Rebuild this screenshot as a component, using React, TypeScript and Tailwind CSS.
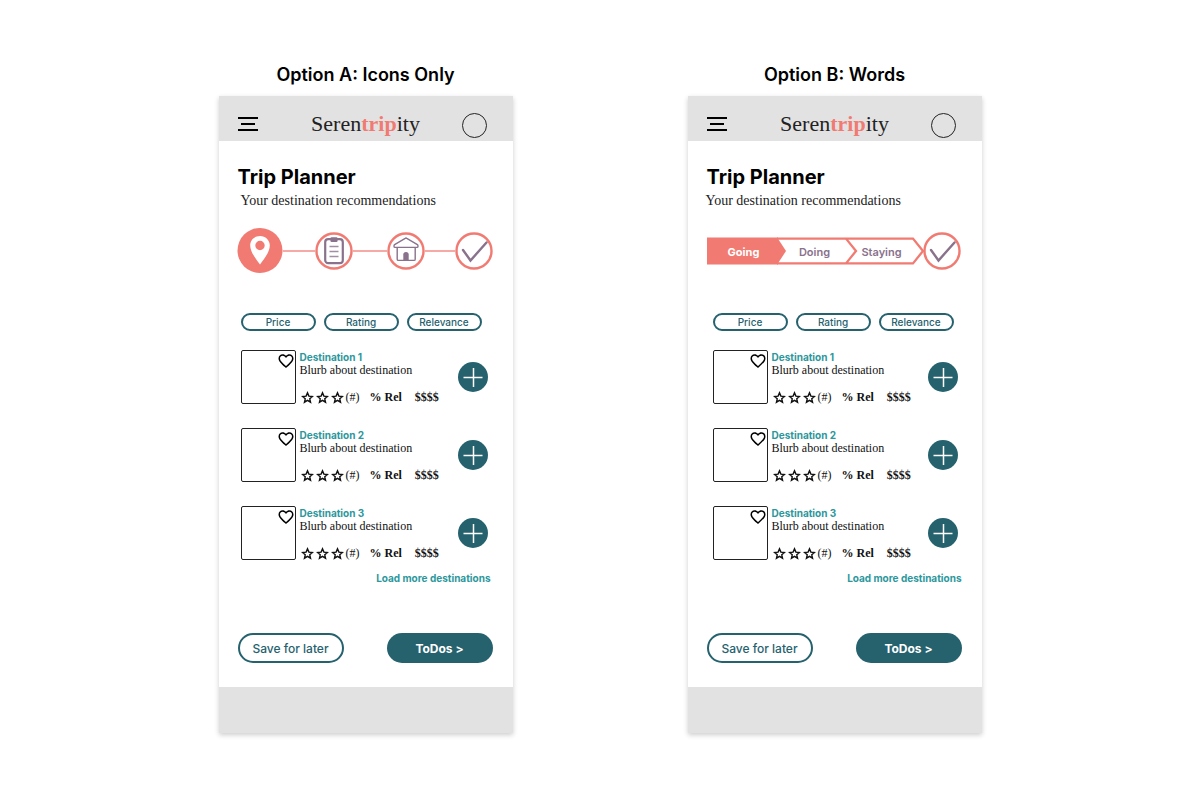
import type { ReactNode } from "react";

const sans = "font-['Inter',sans-serif]";
const serif = "font-['Liberation_Serif',serif]";

function Check() {
  return (
    <svg viewBox="0 0 38 38" className="size-[38px]" fill="none" aria-hidden="true">
      <circle cx="19" cy="19" r="17.5" fill="#fff" stroke="#f17b72" strokeWidth="2.4" />
      <path d="M8 18L15.5 28.5L31.5 10.5" stroke="#8a728c" strokeWidth="2.4" strokeLinecap="round" />
    </svg>
  );
}

function Pin() {
  return (
    <svg viewBox="0 0 46 46" className="size-[46px]" aria-hidden="true">
      <circle cx="23" cy="22.5" r="22.5" fill="#f17b72" />
      <path
        fill="#fff"
        fillRule="evenodd"
        d="M23 8C17.5 8 13.2 12.2 13.2 17.5C13.2 24 19 31 23 36.5C27 31 32.8 24 32.8 17.5C32.8 12.2 28.5 8 23 8ZM23 12.8A4.7 4.7 0 1 1 23 22.2A4.7 4.7 0 1 1 23 12.8Z"
      />
    </svg>
  );
}

function Clipboard() {
  return (
    <svg viewBox="0 0 38 38" className="size-[38px]" fill="none" aria-hidden="true">
      <circle cx="19" cy="19" r="17.5" stroke="#f17b72" strokeWidth="2.4" />
      <rect x="10.2" y="7.2" width="17.6" height="24" rx="3" stroke="#8a728c" strokeWidth="2.2" />
      <rect x="15.4" y="5.2" width="7.2" height="4.8" rx="1.2" fill="#8a728c" />
      <path d="M14.5 14.5H23.5M14.5 19.5H23.5M14.5 24.5H23.5" stroke="#a18ea3" strokeWidth="1.4" />
    </svg>
  );
}

function House() {
  return (
    <svg viewBox="0 0 38 38" className="size-[38px]" fill="none" aria-hidden="true">
      <circle cx="19" cy="19" r="17.5" stroke="#f17b72" strokeWidth="2.4" />
      <path
        d="M18.2 6.4Q19 5.7 19.8 6.4L30.4 12.6Q31 13 31 14.2Q31 15.4 30 15.4H8Q7 15.4 7 14.2Q7 13 7.6 12.6ZM10.2 15.4V27.2Q10.2 28.4 11.4 28.4H27Q28.2 28.4 28.2 27.2V15.4"
        stroke="#8a728c"
        strokeWidth="1.4"
        strokeLinejoin="round"
      />
      <path d="M16.3 28.5V22.5Q16.3 20 19 20Q21.7 20 21.7 22.5V28.5Z" fill="#8a728c" />
    </svg>
  );
}

function IconSteps() {
  return (
    <nav aria-label="Trip steps" className="flex h-[46px] items-center px-[18px] pr-5">
      <button aria-label="Going" className="shrink-0"><Pin /></button>
      <span className="h-0.5 flex-[33] bg-[#f6aaa6]" />
      <button aria-label="Doing" className="shrink-0"><Clipboard /></button>
      <span className="h-0.5 flex-[34] bg-[#f6aaa6]" />
      <button aria-label="Staying" className="shrink-0"><House /></button>
      <span className="h-0.5 flex-[30] bg-[#f6aaa6]" />
      <button aria-label="Done" className="shrink-0"><Check /></button>
    </nav>
  );
}

function WordSteps() {
  return (
    <nav aria-label="Trip steps" className="flex h-[46px] items-center pl-[19px]">
      <div className={`relative flex h-7 w-[216px] pt-0.5 text-[11px] font-semibold text-[#8a728c] ${sans}`}>
        <svg viewBox="0 0 218 28" className="absolute top-0 left-0 h-7 w-[218px]" fill="none" aria-hidden="true">
          <path d="M0 0.5H71V27.5H0Z" fill="#f17b72" />
          <path d="M70 1.6H206L216 14L206 26.4H70M139 1.6L149 14L139 26.4" stroke="#f17b72" strokeWidth="2.3" />
          <path d="M69 1H70.5L79 14L70.5 27H69Z" fill="#f17b72" />
        </svg>
        <button className="relative w-[74px] font-bold text-white">Going</button>
        <button className="relative w-[68px]">Doing</button>
        <button className="relative w-[66px]">Staying</button>
      </div>
      <button aria-label="Done" className="relative"><Check /></button>
    </nav>
  );
}

function Star() {
  return (
    <svg viewBox="0 0 24 24" className="h-[15px] w-[13px]" fill="none" stroke="#111" strokeWidth="2.6" aria-hidden="true">
      <path d="M12 3.5L14.6 9.5L21 10.1L16.2 14.4L17.6 20.7L12 17.3L6.4 20.7L7.8 14.4L3 10.1L9.4 9.5Z" />
    </svg>
  );
}

function Destination({ name }: { name: string }) {
  return (
    <li className="flex h-[54px] items-center">
      <div className="flex h-[54px] w-[55px] shrink-0 justify-end rounded-[2px] border border-[#222]">
        <button aria-label={`Save ${name}`} className="mt-px h-[18px]">
          <svg viewBox="0 0 24 24" className="size-[18px]" fill="#000" aria-hidden="true">
            <path d="M16.5 3c-1.74 0-3.41.81-4.5 2.09C10.91 3.81 9.24 3 7.5 3 4.42 3 2 5.42 2 8.5c0 3.78 3.4 6.86 8.55 11.54L12 21.35l1.45-1.32C18.6 15.36 22 12.28 22 8.5 22 5.42 19.58 3 16.5 3zm-4.4 15.55l-.1.1-.1-.1C7.14 14.24 4 11.39 4 8.5 4 6.5 5.5 5 7.5 5c1.54 0 3.04.99 3.57 2.36h1.87C13.46 5.99 14.96 5 16.5 5c2 0 3.5 1.5 3.5 3.5 0 2.89-3.14 5.74-7.9 10.05z" />
          </svg>
        </button>
      </div>
      <div className={`ml-1 flex h-[54px] flex-1 flex-col text-[12px] leading-[14px] whitespace-nowrap text-[#111] ${serif}`}>
        <h3 className={`text-[10px] leading-[14px] font-bold text-[#2c979c] ${sans}`}>{name}</h3>
        <p className="leading-[13px]">Blurb about destination</p>
        <div className="mt-auto flex h-[14px] items-center gap-0.5 pl-px">
          <Star />
          <Star />
          <Star />
          <span>(#)</span>
          <span className="ml-2 font-bold">% Rel</span>
          <span className="ml-[11px] font-bold">$$$$</span>
        </div>
      </div>
      <button aria-label={`Add ${name}`} className="shrink-0">
        <svg viewBox="0 0 30 30" className="size-[30px]" fill="none" aria-hidden="true">
          <circle cx="15" cy="15" r="15" fill="#25626e" />
          <path d="M5.5 15.5H24.5M15.5 6V25" stroke="#fff" strokeWidth="1.5" />
        </svg>
      </button>
    </li>
  );
}

type PhoneProps = { title: string; steps: ReactNode; subtitlePad: string; listPad: string; morePad: string };

function Phone({ title, steps, subtitlePad, listPad, morePad }: PhoneProps) {
  return (
    <section className="w-[294px] shrink-0">
      <h1 className={`text-center text-[18px] leading-6 font-semibold text-black ${sans}`}>{title}</h1>
      <div className="mt-[9px] bg-white shadow-[0_2px_5px_rgba(0,0,0,0.2)]">
        <header className="grid h-[45px] grid-cols-[1fr_auto_1fr] items-center bg-[#e2e2e2] pt-[11px] pr-[26px] pl-[26px]">
          <button aria-label="Menu" className="-ml-[7px] justify-self-start">
            <svg viewBox="0 0 20 16" className="h-4 w-5" stroke="#000" strokeWidth="1.8" aria-hidden="true">
              <path d="M0 2H20M3 8H17M0 14H20" />
            </svg>
          </button>
          <span className={`text-[22px] leading-6 text-[#222] ${serif}`}>
            Seren<b className="text-[#f17b72]">trip</b>ity
          </span>
          <button aria-label="Profile" className="mt-[3px] size-[25px] justify-self-end rounded-full border border-[#222]" />
        </header>
        <main className="pt-[23px] pb-6">
          <h2 className={`px-[19px] text-[20px] leading-[26px] font-bold text-black ${sans}`}>Trip Planner</h2>
          <p className={`text-[14px] leading-[22px] text-[#222] ${serif} ${subtitlePad}`}>Your destination recommendations</p>
          <div className="mt-4">{steps}</div>
          <div className={listPad}>
            <div className={`mt-[39px] flex gap-2 text-[10px] font-medium text-[#25626e] ${sans}`}>
              {["Price", "Rating", "Relevance"].map((f) => (
                <button key={f} className="h-[18px] w-[75px] rounded-full border-2 border-[#25626e] leading-[14px]">
                  {f}
                </button>
              ))}
            </div>
            <ul className="mt-[19px] flex flex-col gap-6 pr-[25px]">
              <Destination name="Destination 1" />
              <Destination name="Destination 2" />
              <Destination name="Destination 3" />
            </ul>
          </div>
          <div className={`mt-[11px] flex justify-end text-[10px] leading-[14px] font-bold text-[#2c979c] ${sans} ${morePad}`}>
            <a href="#more">Load more destinations</a>
          </div>
          <div className={`mt-12 flex justify-between pr-5 pl-[19px] text-[12px] ${sans}`}>
            <button className="h-[30px] w-[106px] rounded-full border-2 border-[#25626e] pt-px font-medium text-[#25626e]">
              Save for later
            </button>
            <button className="h-[30px] w-[106px] rounded-full bg-[#25626e] pt-px font-bold text-white">ToDos &gt;</button>
          </div>
        </main>
        <footer className="h-[46px] bg-[#e2e2e2]" />
      </div>
    </section>
  );
}

export default function App() {
  return (
    <div className="flex min-h-screen items-start justify-center gap-[175px] bg-white pt-[63px]">
      <Phone
        title="Option A: Icons Only"
        steps={<IconSteps />}
        subtitlePad="pl-[22px]"
        listPad="pl-[22px]"
        morePad="pr-[22px]"
      />
      <Phone
        title="Option B: Words"
        steps={<WordSteps />}
        subtitlePad="pl-[18px]"
        listPad="pl-[25px] -mr-px"
        morePad="pr-5"
      />
    </div>
  );
}
